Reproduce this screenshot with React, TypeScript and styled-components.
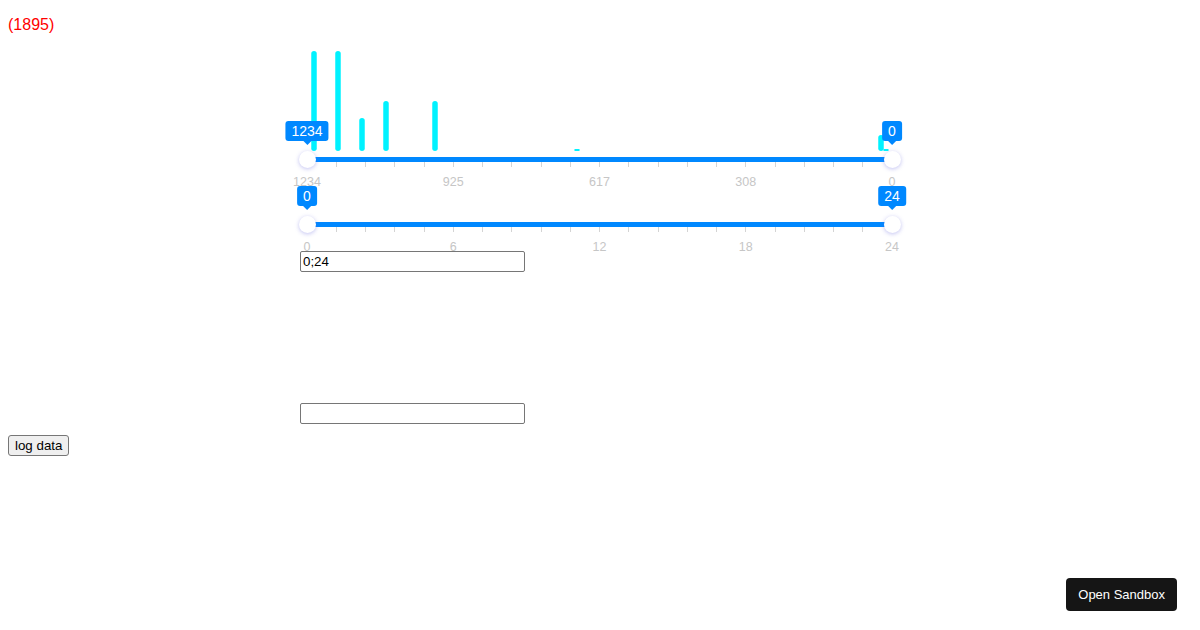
import React, { useState } from 'react';
import styled, { createGlobalStyle } from 'styled-components';

const GlobalStyle = createGlobalStyle`
  body {
    margin: 8px;
    background: #fff;
    font-family: "Liberation Sans", Arial, sans-serif;
  }
`;

// histogram bars: x centre inside the 600px chart, height in px
const BARS = [
  { x: 14, h: 100 },
  { x: 38, h: 100 },
  { x: 62, h: 33 },
  { x: 86, h: 50 },
  { x: 135, h: 50 },
  { x: 277, h: 2 },
  { x: 581, h: 16 },
  { x: 586, h: 2 },
];

const TICKS = Array.from({ length: 21 }, (_, i) => i * 5);

type SliderProps = {
  min: number;
  max: number;
  values: [number, number];
  reversed?: boolean;
};

const RangeSlider = ({ min, max, values, reversed }: SliderProps) => {
  const pct = (v: number) => {
    const p = ((v - min) / (max - min)) * 100;
    return reversed ? 100 - p : p;
  };
  const labels = [0, 0.25, 0.5, 0.75, 1].map((f) =>
    reversed ? Math.floor(max - (max - min) * f) : Math.floor(min + (max - min) * f)
  );
  const left = Math.min(pct(values[0]), pct(values[1]));
  const right = Math.max(pct(values[0]), pct(values[1]));

  return (
    <SliderBlock>
      <RailRow>
        <Track style={{ left: `${left}%`, width: `${right - left}%` }} />
        {TICKS.map((t) => (
          <Tick key={t} style={{ left: `${t}%` }} />
        ))}
        {values.map((v, i) => (
          <Handle key={i} style={{ left: `${pct(v)}%` }}>
            <Tip>{v}</Tip>
          </Handle>
        ))}
      </RailRow>
      <MarkRow>
        {labels.map((l, i) => (
          <Mark key={i} style={{ left: `${i * 25}%` }}>
            {l}
          </Mark>
        ))}
      </MarkRow>
    </SliderBlock>
  );
};

const App = () => {
  const [hours, setHours] = useState('0;24');
  const [note, setNote] = useState('');

  return (
    <>
      <GlobalStyle />
      <Count>(1895)</Count>
      <ChartArea>
        <Histogram width="600" height="100" viewBox="0 0 600 100">
          {BARS.map((b, i) => (
            <rect
              key={i}
              x={b.x - 2.75}
              y={100 - b.h}
              width="5.5"
              height={b.h}
              rx={b.h > 4 ? 2.75 : 1}
              fill="#00f2ff"
            />
          ))}
        </Histogram>
        <RangeSlider min={0} max={1234} values={[1234, 0]} reversed />
        <RangeSlider min={0} max={24} values={[0, 24]} />
        <TextField value={hours} onChange={(e) => setHours(e.target.value)} />
        <Spacer />
        <TextField value={note} onChange={(e) => setNote(e.target.value)} />
      </ChartArea>
      <LogButton>log data</LogButton>
      <SandboxButton>Open Sandbox</SandboxButton>
    </>
  );
};

export default App;

const Count = styled.div`
  margin-top: 8px;
  color: #ff0000;
  font-size: 16px;
  line-height: 18px;
`;

const ChartArea = styled.div`
  display: flex;
  flex-direction: column;
  align-items: stretch;
  width: 600px;
  margin: 17px auto 0;
`;

const Histogram = styled.svg`
  display: block;
  width: 600px;
  overflow: visible;
`;

const SliderBlock = styled.div`
  padding: 0 8px 0 7px;

  & + & {
    margin-top: 30px;
  }
`;

const RailRow = styled.div`
  position: relative;
  height: 17px;
`;

const Track = styled.div`
  position: absolute;
  top: 6px;
  height: 5px;
  background: #0088ff;
`;

const Tick = styled.div`
  position: absolute;
  top: 11px;
  width: 1px;
  height: 5px;
  margin-left: -0.5px;
  background: #d4d4d4;
`;

const Handle = styled.div`
  position: absolute;
  top: 0;
  width: 17px;
  height: 17px;
  margin-left: -8.5px;
  border-radius: 50%;
  background: #fff;
  box-shadow: 0 1px 4px rgba(100, 100, 220, 0.4);
`;

const Tip = styled.div`
  position: absolute;
  left: 50%;
  bottom: 27px;
  transform: translateX(-50%);
  height: 20px;
  padding: 0 6px;
  border-radius: 3px;
  background: #0088ff;
  color: #fff;
  font-size: 14px;
  line-height: 20px;
  white-space: nowrap;

  &::after {
    content: '';
    position: absolute;
    left: 50%;
    top: 100%;
    margin-left: -4px;
    border: 4px solid transparent;
    border-top-color: #0088ff;
    border-bottom: 0;
  }
`;

const MarkRow = styled.div`
  position: relative;
  height: 9px;
  margin-top: 9px;
`;

const Mark = styled.span`
  position: absolute;
  top: 0;
  transform: translateX(-50%);
  color: #c6c6c6;
  font-size: 12.5px;
  line-height: 11px;
  white-space: nowrap;
`;

const TextField = styled.input.attrs({ type: 'text' })`
  display: block;
  box-sizing: border-box;
  width: 225px;
  height: 21px;
  margin: 0;
  padding: 1px 2px;
  border: 1px solid #767676;
  border-radius: 2px;
  font-family: "Liberation Sans", Arial, sans-serif;
  font-size: 13.33px;
  color: #000;
`;

const Spacer = styled.div`
  height: 131px;
`;

const LogButton = styled.button`
  display: block;
  margin-top: 11px;
  height: 21px;
  padding: 1px 6px;
  box-sizing: border-box;
  border: 1px solid #767676;
  border-radius: 3px;
  background: #efefef;
  color: #000;
  font-family: "Liberation Sans", Arial, sans-serif;
  font-size: 13.33px;
`;

const SandboxButton = styled.button`
  position: fixed;
  right: 23px;
  bottom: 19px;
  height: 33px;
  padding: 0 12px;
  border: none;
  border-radius: 4px;
  background: #151515;
  color: #fff;
  font-family: "Liberation Sans", Arial, sans-serif;
  font-size: 13px;
`;
